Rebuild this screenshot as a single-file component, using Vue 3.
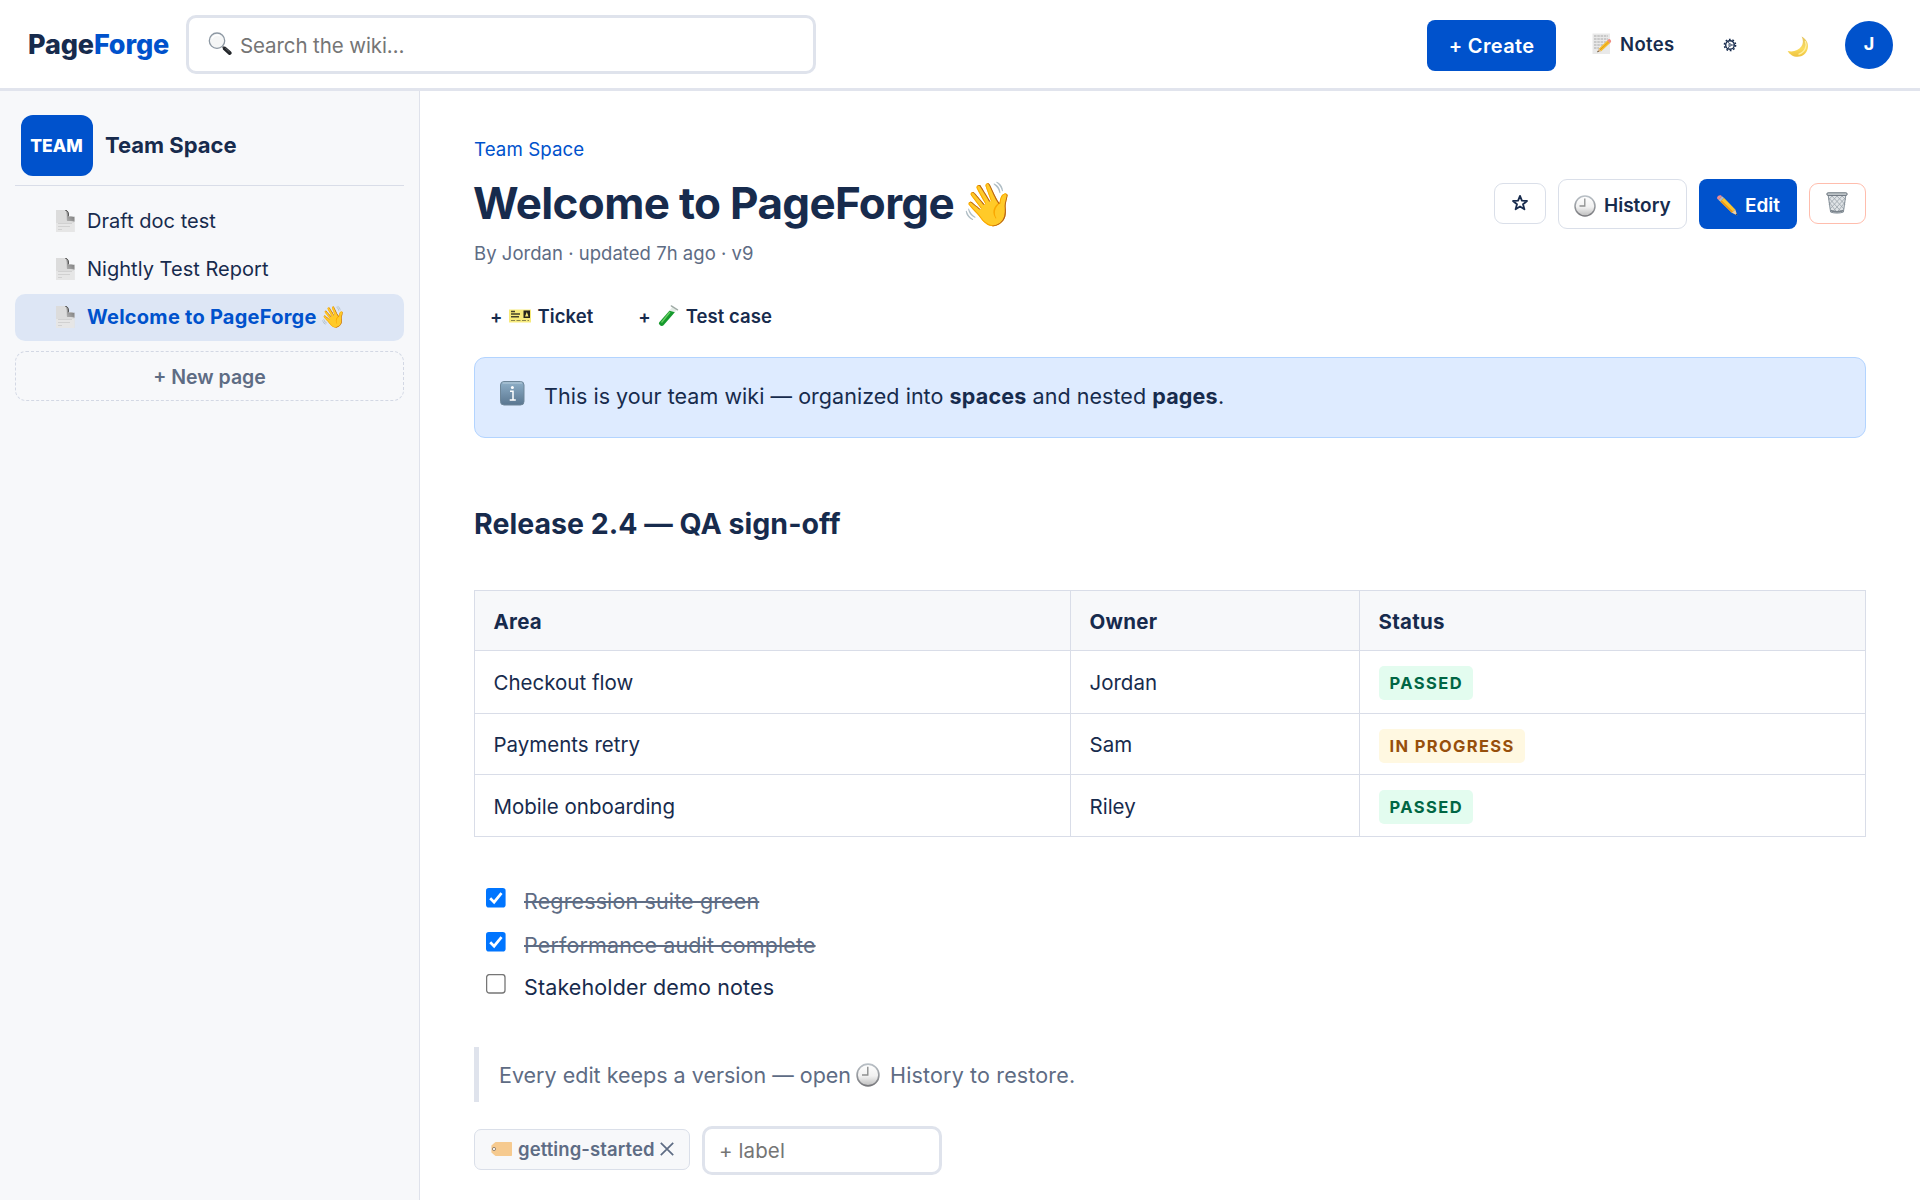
<script setup>
const pages = [
  { title: 'Draft doc test' },
  { title: 'Nightly Test Report' },
  { title: 'Welcome to PageForge', active: true, wave: true },
]
const areas = [
  { area: 'Checkout flow', owner: 'Jordan', status: 'PASSED', kind: 'ok' },
  { area: 'Payments retry', owner: 'Sam', status: 'IN PROGRESS', kind: 'wip' },
  { area: 'Mobile onboarding', owner: 'Riley', status: 'PASSED', kind: 'ok' },
]
const tasks = [
  { text: 'Regression suite green', done: true },
  { text: 'Performance audit complete', done: true },
  { text: 'Stakeholder demo notes', done: false },
]
</script>

<template>
  <div class="app">
    <svg class="defs" width="0" height="0">
      <defs>
        <linearGradient id="face" x1="0" y1="0" x2="0" y2="1">
          <stop offset="0" stop-color="#ffffff" /><stop offset="0.55" stop-color="#f1f1f1" /><stop offset="1" stop-color="#bdbdbd" />
        </linearGradient>
        <linearGradient id="rim" x1="0" y1="0" x2="0" y2="1">
          <stop offset="0" stop-color="#b9c0c6" /><stop offset="1" stop-color="#77777b" />
        </linearGradient>
        <linearGradient id="fold" x1="1" y1="0" x2="0" y2="1">
          <stop offset="0" stop-color="#6a6a6a" /><stop offset="1" stop-color="#b8b8b8" />
        </linearGradient>
        <linearGradient id="infobg" x1="0" y1="0" x2="0" y2="1">
          <stop offset="0" stop-color="#8fb0c9" /><stop offset="1" stop-color="#5a7690" />
        </linearGradient>
        <linearGradient id="moon" x1="0" y1="0" x2="0" y2="1">
          <stop offset="0" stop-color="#e3c25e" /><stop offset="0.6" stop-color="#fbdc5c" /><stop offset="1" stop-color="#eec23f" />
        </linearGradient>
      </defs>
      <symbol id="doc" viewBox="0 0 19 22">
        <path d="M0 0H10.500L18.500 9V22H0Z" fill="#dcdcdc" />
        <path d="M0 13H18.500V22H0Z" fill="#e6e6e6" />
        <path d="M9.500 0C12 .8 12.500 3.500 12 6.400H18.500V11.800C16.500 10.800 13.500 11.300 11 11C10.500 8 11.500 3 9.500 0Z" fill="url(#fold)" />
        <path d="M12.600 0H18.500V6.800C16.500 6 14.500 6 12.600 6.300Z" fill="#f7f8fa" class="corner" />
        <path d="M9 0C12 .4 13 3 12.400 6.400" stroke="#555" stroke-width="1" fill="none" />
        <path d="M2 13.500H16M2 16.500H14M2 19.500H6" stroke="#cbcbcb" stroke-width=".8" />
      </symbol>
      <symbol id="clock" viewBox="0 0 22 22">
        <circle cx="11" cy="11" r="10" fill="url(#face)" stroke="url(#rim)" stroke-width="1.500" />
        <path d="M10.800 3.500V11H5.500" stroke="#8e9090" stroke-width="1.300" fill="none" />
      </symbol>
    </svg>

    <header class="top">
      <div class="logo">Page<span>Forge</span></div>
      <div class="search">
        <svg width="24" height="24" viewBox="0 0 24 24">
          <path d="M14.500 14.500L17.500 17.500" stroke="#777" stroke-width="2" />
          <path d="M16.800 16.600L21.700 21" stroke="#23262a" stroke-width="3.800" stroke-linecap="round" />
          <path d="M17.200 16L21.500 19.900" stroke="#6d7074" stroke-width=".8" />
          <circle cx="9" cy="8.700" r="7.700" fill="#f5f6f6" stroke="#8d98a3" stroke-width="1.300" />
          <path d="M4 6.500C5.500 3.600 9 2.600 12 3.800" stroke="#fff" stroke-width="1.400" fill="none" />
        </svg>
        <span>Search the wiki…</span>
      </div>
      <button class="create"><span>+ Create</span></button>
      <div class="notes">
        <svg width="20" height="22" viewBox="0 0 20 22">
          <rect x=".5" y=".5" width="17.500" height="20.500" fill="#e9e9e9" />
          <path d="M2 3H16M2 6H16M2 9H15M2 12H11M2 15H7" stroke="#a9a9a9" stroke-width="1" stroke-dasharray="2.500 .8" />
          <path d="M6.800 15.700L15.600 7.200L18.200 10L9.200 18.200Z" fill="#f6bd2c" />
          <path d="M8 16.900L16.900 8.700" stroke="#dc9412" stroke-width=".8" />
          <path d="M15.200 7.600L16.600 6.200C17.600 5.600 19.800 7.600 19 9L17.800 10.300Z" fill="#ee8b82" />
          <path d="M6.800 15.700L5.200 19.200L9.200 18.200Z" fill="#d9b07a" />
          <path d="M5.900 17.700L5.200 19.200L6.900 18.800Z" fill="#333" />
        </svg>
        <span>Notes</span>
      </div>
      <svg class="gear" width="14" height="14" viewBox="0 0 14 14">
        <circle cx="7" cy="7" r="5.600" fill="none" stroke="#172b4d" stroke-width="1.500" stroke-dasharray="1.760 1.760" />
        <circle cx="7" cy="7" r="4.300" fill="none" stroke="#172b4d" stroke-width="1.400" />
        <circle cx="7" cy="7" r="1.200" fill="none" stroke="#172b4d" stroke-width=".8" />
        <path d="M8.200 7H11M6.400 5.900L5 3.500M6.400 8.100L5 10.500" stroke="#172b4d" stroke-width=".8" />
      </svg>
      <svg class="moon" width="22" height="22" viewBox="0 0 22 22">
        <path d="M14.600 .6C19.300 3 21.800 7.600 20.800 12.300C19.800 17.300 15.500 20.800 10.500 20.800C6.300 20.800 2.500 18.500 .7 15C6.200 16.300 11.600 14.500 14.300 10.600C16.400 7.600 16.400 4 14.600 .6Z" fill="url(#moon)" />
        <path d="M18.300 5C20.300 9.500 18.500 16 11.500 18.300" stroke="#fff0a0" stroke-width="1.300" fill="none" />
      </svg>
      <div class="avatar">J</div>
    </header>

    <div class="body">
      <aside class="side">
        <div class="space">
          <div class="badge">TEAM</div>
          <div class="name">Team Space</div>
        </div>
        <nav>
          <div v-for="p in pages" :key="p.title" class="item" :class="{ active: p.active }">
            <svg width="19" height="22"><use href="#doc" /></svg>
            <span>{{ p.title }}</span>
            <i v-if="p.wave" class="wave">👋</i>
          </div>
        </nav>
        <div class="newpage">+ New page</div>
      </aside>

      <main class="main">
        <div class="crumb">Team Space</div>
        <div class="titlerow">
          <h1>Welcome to PageForge</h1>
          <i class="wave">👋</i>
          <div class="actions">
            <button class="btn star">
              <svg width="18" height="18" viewBox="0 0 18 18">
                <path d="M9 1.900L10.900 6.700L16 7L12 10.300L13.400 15.300L9 12.500L4.600 15.300L6 10.300L2 7L7.100 6.700Z" fill="none" stroke="#172b4d" stroke-width="1.800" stroke-linejoin="round" />
              </svg>
            </button>
            <button class="btn history">
              <svg width="22" height="22"><use href="#clock" /></svg><span>History</span>
            </button>
            <button class="btn edit">
              <svg width="22" height="22" viewBox="0 0 22 22">
                <path d="M4.200 6.600L7.900 2.800L19.300 14.600L15.800 17.700Z" fill="#fbc52e" />
                <path d="M4.200 6.600L5.600 5.200L17 16.600L15.800 17.700Z" fill="#e8961e" />
                <path d="M2.500 4.900L6 1.200L7.900 2.800L4.200 6.600Z" fill="#b9bcc0" />
                <path d="M1.300 3.700C.3 2 2.800-.3 4.800 .3L6 1.200L2.500 4.900Z" fill="#f08a8d" />
                <path d="M15.800 17.700L19.300 14.600L21.300 20.400Z" fill="#f0cf9d" />
                <path d="M19.600 19.600L20.700 18.600L21.300 20.400Z" fill="#3a3a3a" />
              </svg>
              <span>Edit</span>
            </button>
            <button class="btn trash">
              <svg width="22" height="22" viewBox="0 0 22 22">
                <path d="M1.600 2.500H20.400L17.700 20.200C15 21.500 7 21.500 4.300 20.200Z" fill="#dfe3e6" />
                <path d="M2 5L16 20.500M3 10L11 20.500M5 3L18 17M10 3L19 12.500M15 3L20 8M20 5L6 20.500M19 10L11 20.500M17 3L4 17M12 3L3 12.500M7 3L2.500 8" stroke="#9aa3ab" stroke-width=".8" />
                <path d="M2.200 3L4.600 20C7 21.400 15 21.400 17.400 20L19.800 3" fill="none" stroke="#87919a" stroke-width="1" />
                <path d="M4.600 18.500C8 20 14 20 17.400 18.500" stroke="#7b848c" stroke-width="1.500" fill="none" />
                <rect x=".8" y=".8" width="20.400" height="2.600" rx="1.300" fill="#c7cdd1" stroke="#68727b" stroke-width="1" />
              </svg>
            </button>
          </div>
        </div>
        <div class="meta">By Jordan · updated 7h ago · v9</div>

        <div class="links">
          <div class="link">
            <span>+</span>
            <svg width="22" height="14" viewBox="0 0 22 14">
              <path d="M0 .5H22V13.500H0Z" fill="#f7ea7b" />
              <path d="M2 2.500H6M2 5H11M2 7.800H10" stroke="#45412a" stroke-width="1.400" />
              <path d="M2 11.500H20" stroke="#8d8648" stroke-width="1" stroke-dasharray="4 1.500" />
              <rect x="14.500" y="1.500" width="6.500" height="7.500" fill="#27251b" />
              <path d="M17.800 3L19.500 7.500H16Z" fill="#f7ea7b" />
            </svg>
            <b>Ticket</b>
          </div>
          <div class="link">
            <span>+</span>
            <svg width="22" height="22" viewBox="0 0 22 22">
              <path d="M15.600 1.800L19.800 5L6.500 20.300C4.500 22.300 .9 19.700 2.300 17.200Z" fill="#e4ece6" />
              <path d="M12.500 5.700L17.800 7.300L6.500 20.300C4.500 22.300 .9 19.700 2.300 17.200Z" fill="#159a2d" />
              <path d="M13 7L4.500 17.500" stroke="#68cf62" stroke-width="1.300" />
              <path d="M14.300 .9L20.600 4.900" stroke="#9faaa5" stroke-width="1.300" stroke-linecap="round" />
            </svg>
            <b>Test case</b>
          </div>
        </div>

        <div class="info">
          <svg width="25" height="25" viewBox="0 0 25 25">
            <rect x=".5" y=".5" width="23.500" height="23.500" rx="3.500" fill="url(#infobg)" stroke="#6e8699" />
            <path d="M2.500 2H22" stroke="#b7cbd9" stroke-width="1" />
            <circle cx="12.400" cy="6.600" r="1.500" fill="#fff" />
            <path d="M10 10.200H13V18.700M9.700 18.900H15.800" stroke="#fff" stroke-width="1.500" fill="none" />
          </svg>
          <p>This is your team wiki — organized into <b>spaces</b> and nested <b>pages</b>.</p>
        </div>

        <h2>Release 2.4 — QA sign-off</h2>

        <div class="table">
          <div class="tr th"><div>Area</div><div>Owner</div><div>Status</div></div>
          <div v-for="r in areas" :key="r.area" class="tr">
            <div>{{ r.area }}</div>
            <div>{{ r.owner }}</div>
            <div><span class="pill" :class="r.kind">{{ r.status }}</span></div>
          </div>
        </div>

        <div class="tasks">
          <div v-for="t in tasks" :key="t.text" class="task" :class="{ done: t.done }">
            <svg width="20" height="20" viewBox="0 0 20 20">
              <template v-if="t.done">
                <rect width="19.600" height="19.600" rx="2.800" fill="#0075ff" />
                <path d="M4.200 10.300L8.100 14.200L15.500 5.200" stroke="#fff" stroke-width="2.700" fill="none" />
              </template>
              <rect v-else x=".6" y=".6" width="18.400" height="18.400" rx="2.800" fill="#fff" stroke="#767676" stroke-width="1.300" />
            </svg>
            <span>{{ t.text }}</span>
          </div>
        </div>

        <div class="quote">
          <span class="lead">Every edit keeps a version — open</span>
          <svg width="24" height="24"><use href="#clock" /></svg>
          <span>History to restore.</span>
        </div>

        <div class="tags">
          <div class="tag">
            <svg width="21" height="14" viewBox="0 0 21 14">
              <path d="M4.500 0H20C20.600 0 21 .4 21 1V13C21 13.600 20.600 14 20 14H4.500L.4 10.500V3.500Z" fill="#f6ca8f" />
              <circle cx="3" cy="7" r="1.600" fill="#fff" stroke="#8c7b66" stroke-width=".9" />
            </svg>
            <b>getting-started</b>
            <svg class="x" width="14" height="14" viewBox="0 0 14 14"><path d="M.8 .8L13.200 13.200M13.200 .8L.8 13.200" stroke="#5e6c84" stroke-width="1.700" /></svg>
          </div>
          <div class="label">+ label</div>
        </div>
      </main>
    </div>
  </div>
</template>

<style>
body { background: #fff; }
</style>

<style scoped>
* { box-sizing: border-box; }
.app { width: 1920px; height: 1200px; overflow: hidden; display: flex; flex-direction: column; background: #fff; color: #172b4d; font-family: Inter, "Liberation Sans", sans-serif; white-space: nowrap; }
.defs { position: absolute; }
svg { display: block; flex: none; }
button { font: inherit; padding: 0; color: inherit; }
i { font-style: normal; }

.top { height: 91px; flex: none; border-bottom: 3px solid #e1e4ed; display: flex; align-items: center; padding: 0 27px; }
.logo { width: 159px; padding: 2px 0 0 1px; font-size: 27px; line-height: 32px; font-weight: 800; letter-spacing: -.15px; }
.logo span { color: #0052cc; }
.search { width: 630px; height: 59px; border: 3px solid #dfe3ec; border-radius: 10px; display: flex; align-items: center; gap: 8px; padding-left: 19px; color: #757575; font-size: 20.500px; letter-spacing: -.1px; }
.search span { padding-top: 2px; }
.create { margin-left: auto; width: 129px; height: 51px; border: 0; border-radius: 8px; background: #0052cc; color: #fff; font-size: 20px; font-weight: 600; letter-spacing: .34px; line-height: 26px; padding-top: 2px; margin-top: 2px; }
.notes { margin-left: 36px; display: flex; align-items: center; gap: 8px; width: 132px; font-size: 18.500px; font-weight: 600; letter-spacing: .35px; }
.notes span { padding-bottom: 1px; }
.gear { margin-top: 2px; margin-left: -1px; }
.moon { margin: 5px 36px 0 50px; }
.avatar { width: 48px; height: 48px; border-radius: 50%; margin-top: 2px; background: #0052cc; color: #fff; display: flex; align-items: center; justify-content: center; font-size: 18px; font-weight: 700; padding-bottom: 3px; }

.body { flex: 1; display: flex; min-height: 0; }
.side { width: 420px; flex: none; background: #f7f8fa; border-right: 1px solid #dfe2eb; padding: 24px 15px 0 15px; }
.space { height: 71px; border-bottom: 1px solid #d9dde8; display: flex; align-items: flex-start; padding-left: 6px; gap: 12px; }
.badge { width: 72px; height: 61px; border-radius: 12px; background: #0052cc; color: #fff; display: flex; align-items: center; justify-content: center; font-size: 17.500px; font-weight: 800; padding-right: 1px; }
.name { line-height: 60px; font-size: 22px; font-weight: 700; letter-spacing: 0; }
nav { padding-top: 12px; display: flex; flex-direction: column; gap: 1px; }
.item { height: 47px; border-radius: 10px; display: flex; align-items: center; padding: 0 0 2px 41px; font-size: 20px; letter-spacing: .03px; }
.item span { margin-left: 12px; line-height: 26px; }
.item.active { background: #dde6f5; color: #0052cc; font-weight: 700; letter-spacing: .25px; }
.item.active svg { --corner: #dde6f5; }
.corner { fill: var(--corner, #f7f8fa); }
.item .wave { font-size: 21px; line-height: 24px; margin-left: 3px; font-weight: 400; letter-spacing: 0; }
.newpage { margin-top: 10px; height: 50px; border: 1px dashed #d3d8e4; border-radius: 11px; text-align: center; line-height: 50px; color: #5e6c84; font-size: 19.500px; font-weight: 600; }

.main { flex: 1; min-width: 0; padding: 46px 54px 0; display: flex; flex-direction: column; }
.crumb { line-height: 26px; color: #0052cc; font-size: 18.700px; letter-spacing: .08px; }
.titlerow { height: 54px; margin-top: 13px; display: flex; align-items: center; }
h1 { margin: 0; font-size: 44px; line-height: 54px; font-weight: 700; letter-spacing: -.66px; margin-left: -1px; }
.titlerow .wave { font-size: 43px; line-height: 54px; margin-left: 7px; padding-bottom: 1px; }
.actions { margin-left: auto; display: flex; align-items: center; gap: 12px; font-size: 19px; font-weight: 600; }
.btn { display: flex; align-items: center; background: #fff; border: 1px solid #dadfe9; border-radius: 9px; }
.star { width: 52px; height: 41px; justify-content: center; }
.history { width: 129px; height: 50px; padding-left: 15px; gap: 8px; margin-top: 1px; }
.edit { width: 98px; height: 50px; background: #0052cc; border: 0; color: #fff; padding-left: 17px; gap: 7px; border-radius: 8px; margin-top: 1px; }
.history span, .edit span { padding-top: 4px; }
.history svg, .edit svg { margin-top: 4px; }
.trash { width: 57px; height: 41px; border-color: #ffbdad; justify-content: center; padding: 0 2px 0 0; }
.meta { margin-top: 10px; line-height: 26px; color: #5e6c84; font-size: 18.500px; letter-spacing: .03px; }
.links { margin-top: 37px; padding-left: 16px; display: flex; gap: 45px; font-size: 18.500px; }
.link { display: flex; align-items: center; height: 26px; line-height: 26px; font-weight: 600; letter-spacing: .05px; }
.link svg { margin: 0 7px 0 6px; }
.link b { font-weight: 600; }
.info { margin-top: 28px; height: 81px; border: 1px solid #b3d4ff; border-radius: 11px; background: #deebff; display: flex; padding: 23px 0 0 25px; }
.info p { margin: -1px 0 0 19px; line-height: 32px; font-size: 21.500px; letter-spacing: .04px; }
.info b { font-weight: 700; letter-spacing: .2px; }
h2 { margin: 67px 0 0; line-height: 38px; font-size: 28.500px; font-weight: 700; letter-spacing: .02px; }
.table { margin-top: 47px; border: 1px solid #d9dde8; border-width: 1px 0 0 1px; font-size: 20.500px; }
.tr { display: grid; grid-template-columns: 596px 289px 1fr; height: 61px; }
.tr:nth-child(2) { height: 63px; }
.tr:nth-child(4) { height: 62px; }
.tr > div { border: 1px solid #d9dde8; border-width: 0 1px 1px 0; padding: 1px 0 0 18.500px; display: flex; align-items: center; }
.tr.th { height: 60px; background: #f7f8fa; font-weight: 700; letter-spacing: .25px; }
.pill { height: 34px; line-height: 34px; border-radius: 5px; padding: 0 10px 0 11px; font-size: 16.500px; font-weight: 700; letter-spacing: 1.450px; margin-top: 2px; }
.tr:nth-child(2) .pill { margin-top: 0; }
.ok { background: #e3fcef; color: #006644; }
.wip { background: #fff8e1; color: #974f0c; letter-spacing: 1.350px; }
.tasks { margin-top: 42px; padding-left: 12px; }
.task { height: 43px; display: flex; align-items: center; font-size: 21.500px; letter-spacing: .13px; }
.task:first-child { height: 44px; }
.task:last-child { height: 41px; }
.task svg { margin: 0 18px 6px 0; }
.done { color: #5e6c84; }
.done span { text-decoration: line-through; }
.quote { margin-top: 40px; height: 55px; flex: none; border-left: 5px solid #dfe3ec; padding-left: 20px; display: flex; align-items: center; color: #5e6c84; font-size: 21.500px; letter-spacing: .15px; }
.quote .lead { letter-spacing: 0; }
.quote svg { margin: 0 10px 0 5px; }
.quote span { padding-top: 1px; }
.tags { margin-top: 24px; display: flex; gap: 12px; align-items: flex-start; }
.tag { margin-top: 3px; width: 216px; height: 41px; border: 1px solid #dadfe9; background: #f7f8fa; border-radius: 7px; display: flex; align-items: center; padding: 0 0 2px 16px; color: #5e6c84; font-size: 18.500px; letter-spacing: .09px; }
.tag b { font-weight: 600; margin: 0 5px 0 6px; line-height: 26px; }
.label { width: 240px; height: 49px; border: 3px solid #dfe3ec; border-radius: 10px; padding-left: 14px; line-height: 44px; color: #757575; font-size: 20.500px; letter-spacing: .1px; }
</style>
